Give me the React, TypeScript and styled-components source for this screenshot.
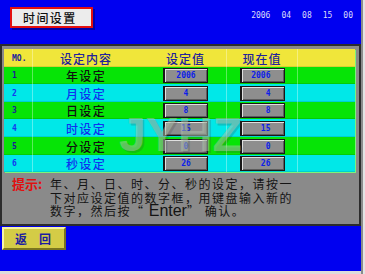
import React from "react";
import styled, { createGlobalStyle } from "styled-components";

const GlobalStyle = createGlobalStyle`
  html, body { margin: 0; padding: 0; background: #0000f0; }
  * { box-sizing: border-box; }
`;

const CJK = `"Noto Sans CJK SC", "Noto Sans", sans-serif`;
const MONO = `"DejaVu Sans Mono", "Liberation Mono", monospace`;

const Screen = styled.div`
  position: relative;
  width: 365px;
  height: 274px;
  background: #0000f0;
  display: flex;
  flex-direction: column;
  box-shadow: inset -2px 0 0 #e4e4e4, inset -4px 0 0 #8c8c8c, inset 0 -3px 0 #dcdcdc;
`;

const TopBar = styled.div`
  height: 44px;
  display: flex;
  align-items: flex-start;
  padding: 7px 12px 0 10px;
`;

const TitleBox = styled.div`
  width: 83px;
  height: 21px;
  border: 2px solid #e41010;
  background: #ececec;
  box-shadow: 2px 2px 0 #0000a8;
  display: flex;
  align-items: center;
  padding-left: 11px;
  font-family: ${CJK};
  font-size: 12px;
  font-weight: 500;
  letter-spacing: 1.4px;
  color: #111;
`;

const Clock = styled.div`
  margin-left: auto;
  margin-top: 5px;
  display: flex;
  gap: 11px;
  font-family: ${MONO};
  font-size: 8px;
  line-height: 8px;
  color: #dcdcf8;
`;

const Panel = styled.div`
  position: relative;
  width: 361px;
  height: 182px;
  background: #8a8a8a;
  border: 2px solid #2c2c2c;
  padding: 3px 4px 0 2px;
  overflow: hidden;
`;

const Table = styled.div`
  display: flex;
  flex-direction: column;
  width: 351px;
  box-shadow: 1px 1px 0 #7cf47c;
`;

const Row = styled.div<{ $bg: string; $h: number }>`
  display: grid;
  grid-template-columns: 28px 107px 87px 71px 58px;
  height: ${(p) => p.$h}px;
  background: ${(p) => p.$bg};
  box-shadow: inset 0 -1px 0 rgba(0, 0, 0, 0.1);
`;

const Cell = styled.div<{ $line?: boolean; $shift?: number }>`
  display: flex;
  align-items: center;
  justify-content: center;
  padding-left: ${(p) => p.$shift ?? 0}px;
  border-left: ${(p) => (p.$line ? "1px solid rgba(255,255,255,0.35)" : "none")};
`;

const NoCell = styled.div<{ $color: string }>`
  display: flex;
  align-items: center;
  padding-left: 8px;
  font-family: ${MONO};
  font-weight: bold;
  font-size: 8px;
  color: ${(p) => p.$color};
`;

const HeadText = styled.span`
  font-family: ${CJK};
  font-size: 12px;
  font-weight: 500;
  letter-spacing: 1px;
  color: #22229c;
`;

const Label = styled.span<{ $color: string }>`
  font-family: ${CJK};
  font-size: 12px;
  font-weight: 500;
  letter-spacing: 1.4px;
  color: ${(p) => p.$color};
`;

const ValueBox = styled.div<{ $align: "center" | "right" }>`
  width: 45px;
  height: 15px;
  background: #8e8e8e;
  border-style: solid;
  border-color: #181818;
  border-width: 1px 1px 1px 2px;
  box-shadow: inset 1px 1px 0 #e0e0e0, inset -1px -1px 0 #5c5c5c;
  display: flex;
  align-items: center;
  justify-content: ${(p) => (p.$align === "center" ? "center" : "flex-end")};
  padding-right: ${(p) => (p.$align === "center" ? 0 : 13)}px;
  font-family: ${MONO};
  font-weight: bold;
  font-size: 8px;
  color: #0c1ee8;
`;

const Hint = styled.div`
  display: flex;
  padding: 4px 0 0 8px;
`;

const HintLabel = styled.span`
  font-family: ${CJK};
  font-size: 13px;
  font-weight: bold;
  line-height: 16px;
  color: #e01010;
  width: 38px;
  flex-shrink: 0;
`;

const HintText = styled.div`
  font-family: ${CJK};
  font-size: 12px;
  line-height: 13.7px;
  letter-spacing: 1.5px;
  color: #141414;
  padding-top: 1px;
`;

const Enter = styled.span`
  font-family: "Liberation Sans", Arial, sans-serif;
  font-size: 16px;
  letter-spacing: 0;
  line-height: 12px;
`;

const Watermark = styled.div`
  position: absolute;
  left: 117px;
  top: 65px;
  font-family: "Liberation Sans", Arial, sans-serif;
  font-weight: bold;
  font-size: 48px;
  line-height: 48px;
  color: rgba(175, 195, 175, 0.5);
  text-shadow: 2px 2px 0 rgba(60, 60, 60, 0.22);
  pointer-events: none;
`;

const BackButton = styled.div`
  margin: 1px 0 0 2px;
  width: 64px;
  height: 23px;
  background: #d4cc46;
  border-style: solid;
  border-width: 2px;
  border-color: #f6f2a8 #7a7420 #7a7420 #f6f2a8;
  display: flex;
  align-items: center;
  padding-left: 11px;
  font-family: ${CJK};
  font-size: 12px;
  font-weight: bold;
  letter-spacing: 12px;
  color: #1c1ca0;
`;

const rows = [
  { no: "1", label: "年设定", set: "2006", now: "2006", h: 17 },
  { no: "2", label: "月设定", set: "4", now: "4", h: 18 },
  { no: "3", label: "日设定", set: "8", now: "8", h: 17 },
  { no: "4", label: "时设定", set: "15", now: "15", h: 18 },
  { no: "5", label: "分设定", set: "0", now: "0", h: 18 },
  { no: "6", label: "秒设定", set: "26", now: "26", h: 17 },
];

export default function App() {
  return (
    <>
      <GlobalStyle />
      <Screen>
        <TopBar>
          <TitleBox>时间设置</TitleBox>
          <Clock>
            {["2006", "04", "08", "15", "00"].map((t, i) => (
              <span key={i}>{t}</span>
            ))}
          </Clock>
        </TopBar>
        <Panel>
          <Table>
            <Row $bg="#f0e63a" $h={18}>
              <NoCell $color="#22229c">MO.</NoCell>
              <Cell $line>
                <HeadText>设定内容</HeadText>
              </Cell>
              <Cell $shift={6}>
                <HeadText>设定值</HeadText>
              </Cell>
              <Cell $line>
                <HeadText>现在值</HeadText>
              </Cell>
              <Cell $line />
            </Row>
            {rows.map((r, i) => {
              const green = i % 2 === 0;
              return (
                <Row key={r.no} $bg={green ? "#06e406" : "#00e8e8"} $h={r.h}>
                  <NoCell $color={green ? "#1a1a9c" : "#1438f0"}>{r.no}</NoCell>
                  <Cell $line>
                    <Label $color={green ? "#101010" : "#1030f0"}>{r.label}</Label>
                  </Cell>
                  <Cell $shift={6}>
                    <ValueBox $align="center">{r.set}</ValueBox>
                  </Cell>
                  <Cell $line>
                    <ValueBox $align="right">{r.now}</ValueBox>
                  </Cell>
                  <Cell $line />
                </Row>
              );
            })}
          </Table>
          <Hint>
            <HintLabel>提示:</HintLabel>
            <HintText>
              <div>年、月、日、时、分、秒的设定，请按一</div>
              <div>下对应设定值的数字框，用键盘输入新的</div>
              <div>
                数字，然后按“ <Enter>Enter</Enter>” 确认。
              </div>
            </HintText>
          </Hint>
          <Watermark>JYHZ</Watermark>
        </Panel>
        <BackButton>返回</BackButton>
      </Screen>
    </>
  );
}
